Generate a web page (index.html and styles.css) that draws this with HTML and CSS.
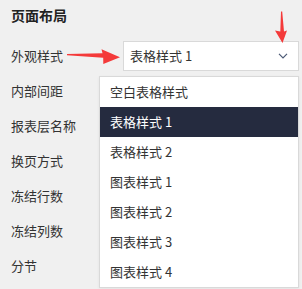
FILE: index.html
```html
<html>
    <head>
        <meta charset="utf-8" />
        <title>页面布局</title>
        <link rel="stylesheet" href="styles.css">
    </head>
    <body>
        <div class="panel">
            <div class="panel-title">页面布局</div>
            <div class="form">
                <div class="row">
                    <span class="label">外观样式</span>
                    <div class="select">
                        <span class="select-text">表格样式 1</span>
                        <svg class="chevron" width="10" height="6" viewBox="0 0 10 6">
                            <path d="M1 0.8 L5 4.8 L9 0.8" fill="none" stroke="#4c5a76" stroke-width="1.2"/>
                        </svg>
                        <!-- 下拉选项 -->
                        <ul class="menu">
                            <li>空白表格样式</li>
                            <li class="active">表格样式 1</li>
                            <li>表格样式 2</li>
                            <li>图表样式 1</li>
                            <li>图表样式 2</li>
                            <li>图表样式 3</li>
                            <li>图表样式 4</li>
                        </ul>
                    </div>
                </div>
                <div class="row"><span class="label">内部间距</span></div>
                <div class="row"><span class="label">报表层名称</span></div>
                <div class="row"><span class="label">换页方式</span></div>
                <div class="row"><span class="label">冻结行数</span></div>
                <div class="row"><span class="label">冻结列数</span></div>
                <div class="row"><span class="label">分节</span></div>
            </div>
            <!-- 标注箭头 -->
            <svg class="marks" width="302" height="289" viewBox="0 0 302 289">
                <polygon points="67,54 102.5,53.3 101.5,49.3 120,57.3 103.3,64 103.2,57.8 67,55.2" fill="#f43a3a"/>
                <polygon points="281,11.5 282.2,11.5 284,31.5 287,30.5 282.5,43 275,30.5 280.3,31.5" fill="#f43a3a"/>
            </svg>
        </div>
    </body>
</html>
```

FILE: styles.css
```css
body {
    margin: 0;
    background-color: #f0f0f0;
    font-family: "Noto Sans CJK SC", "Liberation Sans", sans-serif;
    font-size: 13px;
    color: #333;
}
.panel {
    position: relative;
    height: 289px;
    padding-left: 11px;
    overflow: hidden;
}
.panel-title {
    height: 30px;
    line-height: 30px;
    font-size: 14px;
    font-weight: bold;
    color: #222;
}
.form {
    margin-top: 8px;
}
.row {
    display: flex;
    align-items: center;
    height: 35px;
}
.label {
    width: 112px;
}
.select {
    position: relative;
    display: flex;
    align-items: center;
    justify-content: space-between;
    box-sizing: border-box;
    width: 176px;
    height: 30px;
    padding: 0 10px 0 6px;
    background-color: #fff;
    border: 1px solid #d9d9d9;
}
.chevron {
    margin-top: 1px;
}
.menu {
    position: absolute;
    top: 34px;
    left: -25px;
    width: 198px;
    margin: 0;
    padding: 0;
    list-style-type: none;
    background-color: #fff;
    border: 1px solid #d9d9d9;
    box-shadow: 0 1px 3px rgba(0, 0, 0, 0.06);
}
.menu li {
    height: 30px;
    line-height: 30px;
    padding-left: 10px;
    color: #333;
}
.menu li.active {
    background-color: #252b3f;
    color: #fff;
}
.marks {
    position: absolute;
    top: 0;
    left: 0;
    pointer-events: none;
}
```
